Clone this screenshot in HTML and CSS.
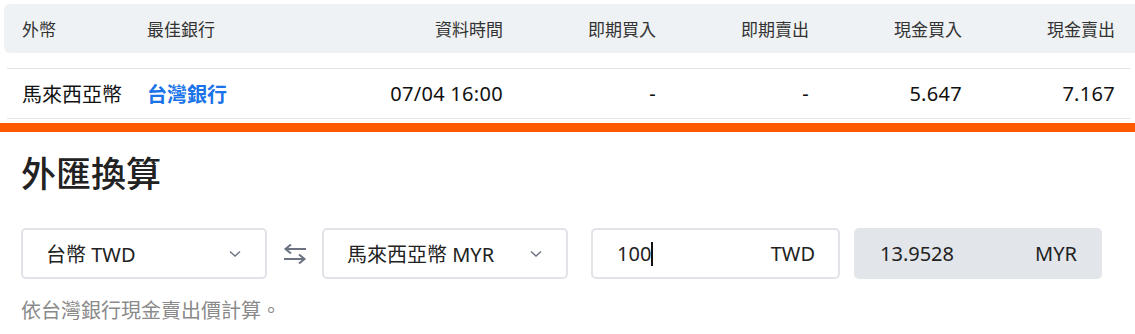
FILE: index.html
```html
<!DOCTYPE html>
<html lang="zh-Hant">
<head>
    <meta charset="UTF-8">
    <meta name="viewport" content="width=device-width, initial-scale=1.0">
    <title>外匯換算</title>
    <link rel="stylesheet" href="styles.css">
</head>
<body>
    <div class="top">
        <div class="rates">
            <div class="rate-head">
                <span>外幣</span>
                <span>最佳銀行</span>
                <span class="num">資料時間</span>
                <span class="num">即期買入</span>
                <span class="num">即期賣出</span>
                <span class="num">現金買入</span>
                <span class="num">現金賣出</span>
            </div>
            <div class="rate-row">
                <span>馬來西亞幣</span>
                <span><a class="bank" href="#">台灣銀行</a></span>
                <span class="num">07/04 16:00</span>
                <span class="num">-</span>
                <span class="num">-</span>
                <span class="num">5.647</span>
                <span class="num">7.167</span>
            </div>
        </div>
        <div class="edge"></div>
    </div>
    <div class="divider"></div>

    <div class="converter">
        <h2>外匯換算</h2>
        <div class="controls">
            <div class="select">
                <span>台幣 TWD</span>
                <svg width="12" height="8" viewBox="0 0 12 8"><path d="M1 1.5 L6 6 L11 1.5" fill="none" stroke="#6b7280" stroke-width="1.4"/></svg>
            </div>
            <svg class="swap" width="24" height="20" viewBox="0 0 24 20">
                <path d="M23 5 H3 M8 0.5 L2.5 5 L8 9.5" fill="none" stroke="#6b7280" stroke-width="2"/>
                <path d="M1 15 H21 M16 10.5 L21.5 15 L16 19.5" fill="none" stroke="#6b7280" stroke-width="2"/>
            </svg>
            <div class="select">
                <span>馬來西亞幣 MYR</span>
                <svg width="12" height="8" viewBox="0 0 12 8"><path d="M1 1.5 L6 6 L11 1.5" fill="none" stroke="#6b7280" stroke-width="1.4"/></svg>
            </div>
            <div class="amount">
                <span class="value">100<i class="caret"></i></span>
                <span>TWD</span>
            </div>
            <div class="amount result">
                <span class="value">13.9528</span>
                <span>MYR</span>
            </div>
        </div>
        <p class="note">依台灣銀行現金賣出價計算。</p>
    </div>
</body>
</html>
```

FILE: styles.css
```css
body {
    margin: 0;
    font-family: "Noto Sans", "Noto Sans CJK TC", sans-serif;
    color: #222;
    background: #fff;
    width: 1135px;
    overflow: hidden;
}

.top {
    display: flex;
    align-items: flex-start;
}

.rates {
    flex: 1;
    padding: 4px 5px 0 4px;
}

.edge {
    width: 2px;
    height: 57px;
    background: #ff5a00;
}

.rate-head, .rate-row {
    display: grid;
    grid-template-columns: 125px 227px repeat(5, 153px);
    align-items: center;
    padding: 0 6px;
}

.rate-head span, .rate-row span {
    padding: 0 12px;
}

.rate-head {
    height: 49px;
    background: #eff2f4;
    border-radius: 6px;
    font-size: 17px;
    color: #333;
}

.rate-row {
    height: 49px;
    margin: 15px 10px 0 3px;
    padding: 0 3px;
    border-top: 1px solid #e3e3e3;
    border-bottom: 1px solid #e3e3e3;
    font-size: 20px;
    color: #111;
}

.rate-row .num {
    letter-spacing: 0.3px;
}

.num {
    text-align: right;
}

.bank {
    color: #1a73e8;
    font-weight: bold;
    text-decoration: none;
}

.divider {
    height: 9px;
    margin-top: 4px;
    background: #ff5a00;
}

.converter {
    padding: 0 21px;
}

.converter h2 {
    margin: 17px 0 0 0;
    font-size: 35px;
    font-weight: 500;
    line-height: 50px;
    color: #222;
}

.controls {
    display: flex;
    align-items: center;
    margin-top: 29px;
}

.select {
    width: 246px;
    height: 51px;
    box-sizing: border-box;
    border: 2px solid #e1e3e8;
    border-radius: 5px;
    display: flex;
    align-items: center;
    justify-content: space-between;
    padding: 0 24px 0 23px;
    font-size: 20px;
    color: #222;
}

.swap {
    margin: 0 15px 0 16px;
}

.amount {
    width: 249px;
    height: 51px;
    box-sizing: border-box;
    border: 2px solid #e1e3e8;
    border-radius: 5px;
    margin-left: 23px;
    display: flex;
    align-items: center;
    justify-content: space-between;
    padding: 0 23px 0 24px;
    font-size: 20px;
    color: #222;
}

.value {
    display: flex;
    align-items: center;
}

.caret {
    width: 1.5px;
    height: 24px;
    background: #111;
}

.result {
    width: 248px;
    margin-left: 14px;
    background: #e2e5e9;
    border-color: #e2e5e9;
}

.note {
    margin: 16px 0 0 0;
    font-size: 20px;
    color: #8a8a8a;
}
```
